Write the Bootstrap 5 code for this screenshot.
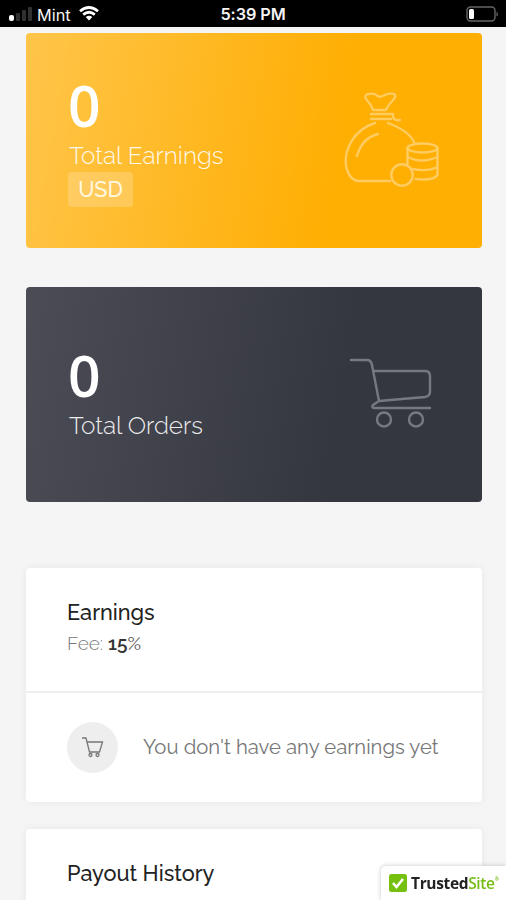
<!DOCTYPE html>
<html lang="en">
<head>
<meta charset="utf-8">
<meta name="viewport" content="width=device-width, initial-scale=1">
<title>Earnings</title>
<link href="https://cdn.jsdelivr.net/npm/bootstrap@5.3.0/dist/css/bootstrap.min.css" rel="stylesheet">
<style>
html, body { height: 900px; overflow: hidden; }
body { background: #f5f5f5; font-family: Raleway, Lato, sans-serif; color: #222; }
.status-bar { height: 27px; background: #000; color: #f4f4f4; font: 400 16.3px/27px Inter, sans-serif; flex: none; }
.status-bar > * { flex: 1 1 0; }
.clock { font-weight: 600; letter-spacing: -.1px; padding-top: 1px; }
.page { height: 873px; overflow: hidden; padding: 6px 24px 0 26px; }
.stat { height: 215px; border-radius: 4px; padding: 0 42px; margin-bottom: 39px; color: #fff; }
.stat-gold { background: linear-gradient(100deg, #ffc54a 0%, #ffae02 68%); }
.stat-dark { background: linear-gradient(100deg, #4b4c55 0%, #353740 68%); margin-bottom: 66px; }
.stat svg { margin-bottom: 4px; }
.stat-value { font: 600 57px/60px "Open Sans", sans-serif; margin-bottom: 6px; }
.stat-dark .stat-value { margin-top: -4px; }
.stat-name { font-size: 24.3px; line-height: 30px; font-weight: 300; opacity: .9; white-space: nowrap; padding-left: 1px; }
.unit { background: rgba(255,255,255,.2); color: #fff8e0; border-radius: 4px; width: 65px; height: 35px; font-size: 21.500px; font-weight: 500; line-height: 35px; margin-top: 1px; }
.panel { background: #fff; border-radius: 4px; box-shadow: 0 0 10px rgba(0,0,0,.06); margin-bottom: 27px; }
.panel-top { height: 125px; padding: 30px 41px 0; border-bottom: 2px solid #efefef; }
.panel-title { font-size: 21.700px; line-height: 30px; font-weight: 500; margin: 0; }
.fee { font-size: 19px; line-height: 30px; font-weight: 300; color: #777; }
.fee span { color: #333; font-weight: 600; }
.fee i { font-style: normal; font-weight: 400; color: #555; }
.empty-row { height: 109px; padding: 0 41px; gap: 25px; font-size: 20.300px; color: #777; white-space: nowrap; }
.round-icon { width: 51px; height: 51px; background: #eee; flex: none; }
.trust { position: fixed; right: 0; bottom: 0; width: 125px; height: 34px; background: #fff; border-top-left-radius: 5px; box-shadow: 0 0 5px rgba(0,0,0,.22); padding-left: 8px; gap: 4px; font: 700 15.5px/34px "Open Sans", sans-serif; letter-spacing: -.35px; color: #222; }
.trust b { color: #77bd16; font-weight: 600; }
.trust sup { font-size: 5px; top: -8px; color: #77bd16; }
</style>
</head>
<body>
<header class="status-bar d-flex px-2">
  <div class="d-flex align-items-center">
    <svg width="25" height="15" viewBox="0 0 25 15"><rect x="1" y="9" width="5" height="6" rx="2" fill="#fff"/><g fill="#303030"><rect x="8" y="7" width="4" height="8" rx="1"/><rect x="14" y="4" width="4" height="11" rx="1"/><rect x="20" y="1" width="4" height="14" rx="1"/></g></svg>
    <span class="ms-1 mt-1">Mint</span>
    <svg class="ms-2" width="20" height="15" viewBox="0 0 20 15" fill="none" stroke="#fff" stroke-width="2.7"><path d="M1 5.2Q10-2.2 19 5.2M4.2 8.6Q10 3.9 15.8 8.6"/><path d="M6.7 11Q10 8.3 13.3 11L10 14.6Z" fill="#fff" stroke="none"/></svg>
  </div>
  <div class="clock text-center">5:39 PM</div>
  <div class="d-flex justify-content-end align-items-center">
    <svg width="34" height="16" viewBox="0 0 34 16"><rect x="3" y="1" width="28" height="14" rx="3.500" fill="none" stroke="#666" stroke-width="1.400"/><rect x="5" y="3" width="5" height="10" rx="1.500" fill="#fff"/><path d="M32.500 5.500v5q2-1 1.500-2.500t-1.500-2.500" fill="#666"/></svg>
  </div>
</header>
<main class="page">
  <section class="stat stat-gold d-flex justify-content-between align-items-center">
    <div><div class="stat-value">0</div><div class="stat-name">Total Earnings</div><div class="unit text-center">USD</div></div>
    <svg width="98" height="98" viewBox="342 90 98 98" fill="none" stroke="#ffcc62" stroke-width="2.4" stroke-linecap="round" stroke-linejoin="round"><path d="M373 110Q371 104 366 99Q364 94 369 94Q374 93 376 95L380 97L385 95Q388 93 394 94Q397 96 393 100Q388 105 386 110ZM371 114h22v3q1 4 7 3M371 119h20M375 123Q359 128 351 142Q343 157 347 170Q351 181 359 181H390M388 123Q409 131 414 142M357 156Q362 138 378 134"/><circle cx="402" cy="175" r="10.7"/><ellipse cx="422.500" cy="148" rx="15" ry="4.500"/><path d="M407.500 148v16M437.500 148v27q-4 6-22 4M408 157q13 7 29.500 0M412 169q15 3 25.500-2"/></svg>
  </section>
  <section class="stat stat-dark d-flex justify-content-between align-items-center">
    <div><div class="stat-value">0</div><div class="stat-name">Total Orders</div></div>
    <svg width="92" height="76" viewBox="348 355 92 76" fill="none" stroke="#777981" stroke-width="2.4" stroke-linecap="round" stroke-linejoin="round"><path d="M351 360h16q4 0 5 5l7 36 46-4q5-1 5-5v-16q0-5-5-5H374M379 401l-6 4q-2 3 2 3h55"/><circle cx="384" cy="419.500" r="7"/><circle cx="416" cy="419.500" r="7"/></svg>
  </section>
  <section class="panel">
    <div class="panel-top"><h2 class="panel-title">Earnings</h2><div class="fee">Fee: <span>15<i>%</i></span></div></div>
    <div class="empty-row d-flex align-items-center">
      <div class="round-icon rounded-circle d-flex align-items-center justify-content-center"><svg width="23" height="23" viewBox="0 0 23 23" fill="none" stroke="#777" stroke-width="1.3"><path d="M1 2h4l3.500 14h10l3-10H6"/><circle cx="9.500" cy="19" r="1.500"/><circle cx="16.500" cy="19" r="1.500"/></svg></div>
      <span>You don't have any earnings yet</span>
    </div>
  </section>
  <section class="panel"><div class="panel-top"><h2 class="panel-title">Payout History</h2></div></section>
</main>
<aside class="trust d-flex align-items-center">
  <svg width="18" height="18" viewBox="0 0 18 18"><rect width="18" height="18" rx="2.500" fill="#76c010"/><path d="M4 9l3.500 4L14 5" fill="none" stroke="#fff" stroke-width="2.600"/></svg>
  <span>Trusted<b>Site</b><sup>®</sup></span>
</aside>
<script src="https://cdn.jsdelivr.net/npm/bootstrap@5.3.0/dist/js/bootstrap.bundle.min.js"></script>
</body>
</html>
